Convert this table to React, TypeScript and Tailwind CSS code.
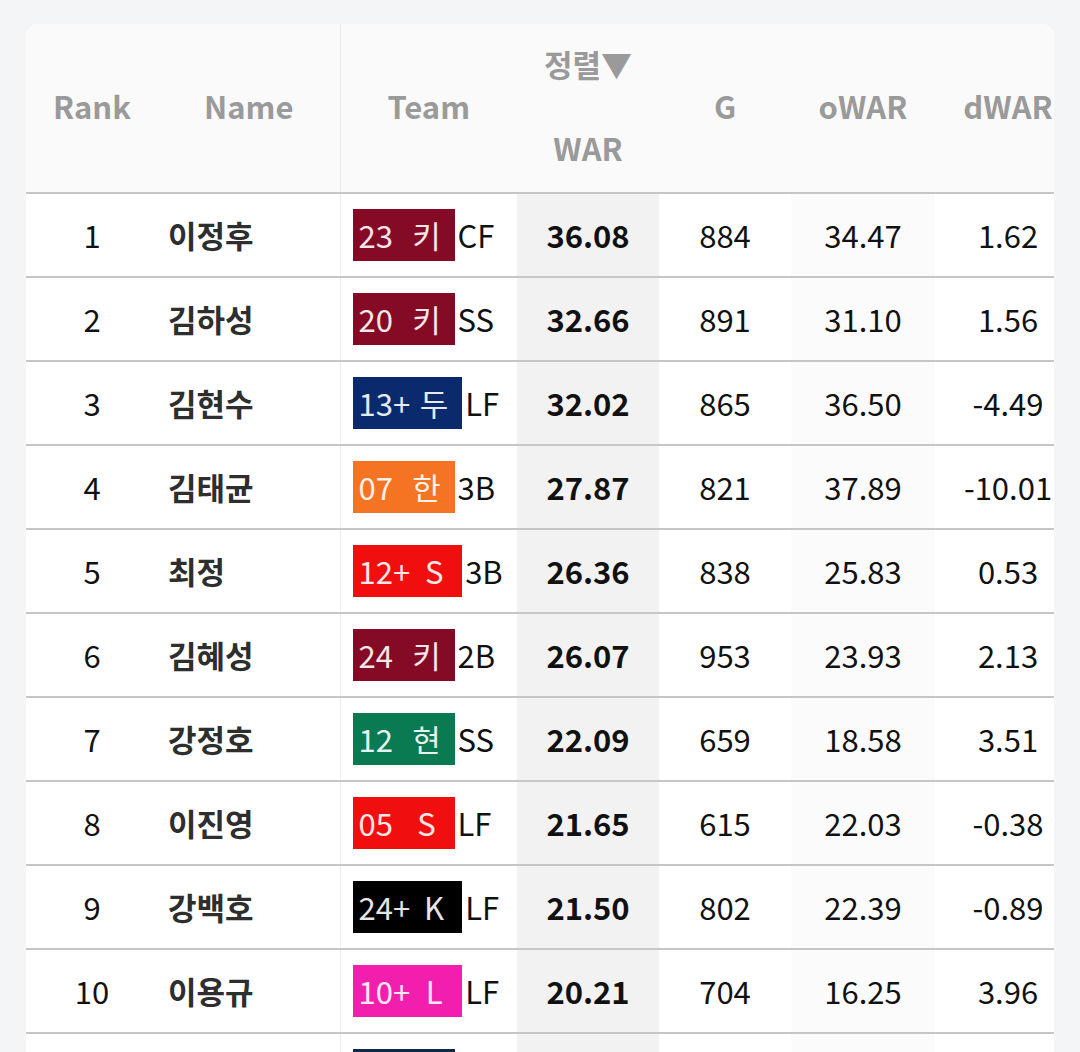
import React from "react";

type Row = {
  rank: number;
  name: string;
  num: string;
  team: string;
  color: string;
  pos: string;
  war: string;
  g: string;
  owar: string;
  dwar: string;
};

const rows: Row[] = [
  { rank: 1, name: "이정후", num: "23", team: "키", color: "bg-[#840a25]", pos: "CF", war: "36.08", g: "884", owar: "34.47", dwar: "1.62" },
  { rank: 2, name: "김하성", num: "20", team: "키", color: "bg-[#840a25]", pos: "SS", war: "32.66", g: "891", owar: "31.10", dwar: "1.56" },
  { rank: 3, name: "김현수", num: "13+", team: "두", color: "bg-[#0b2a6e]", pos: "LF", war: "32.02", g: "865", owar: "36.50", dwar: "-4.49" },
  { rank: 4, name: "김태균", num: "07", team: "한", color: "bg-[#f47424]", pos: "3B", war: "27.87", g: "821", owar: "37.89", dwar: "-10.01" },
  { rank: 5, name: "최정", num: "12+", team: "S", color: "bg-[#f00e0e]", pos: "3B", war: "26.36", g: "838", owar: "25.83", dwar: "0.53" },
  { rank: 6, name: "김혜성", num: "24", team: "키", color: "bg-[#840a25]", pos: "2B", war: "26.07", g: "953", owar: "23.93", dwar: "2.13" },
  { rank: 7, name: "강정호", num: "12", team: "현", color: "bg-[#0a7a52]", pos: "SS", war: "22.09", g: "659", owar: "18.58", dwar: "3.51" },
  { rank: 8, name: "이진영", num: "05", team: "S", color: "bg-[#f00e0e]", pos: "LF", war: "21.65", g: "615", owar: "22.03", dwar: "-0.38" },
  { rank: 9, name: "강백호", num: "24+", team: "K", color: "bg-[#000000]", pos: "LF", war: "21.50", g: "802", owar: "22.39", dwar: "-0.89" },
  { rank: 10, name: "이용규", num: "10+", team: "L", color: "bg-[#f21fae]", pos: "LF", war: "20.21", g: "704", owar: "16.25", dwar: "3.96" },
  { rank: 11, name: "양의지", num: "15", team: "N", color: "bg-[#0f2847]", pos: "C", war: "19.87", g: "702", owar: "17.40", dwar: "2.47" },
];

export default function App() {
  return (
    <div
      className="h-[1052px] w-[1080px] overflow-hidden bg-[#f4f5f7] pt-[24px] pl-[26px]"
      style={{ fontFamily: '"Noto Sans CJK KR", "Noto Sans", sans-serif' }}
    >
      <div className="w-[1028px] overflow-hidden rounded-t-[12px] bg-white">
        <table className="w-[1055px] table-fixed border-collapse">
          <colgroup>
            <col className="w-[132px]" />
            <col className="w-[182px]" />
            <col className="w-[177px]" />
            <col className="w-[142px]" />
            <col className="w-[132px]" />
            <col className="w-[144px]" />
            <col className="w-[146px]" />
          </colgroup>
          <thead>
            <tr className="h-[168px] bg-[#fafafa] text-[31px] font-bold text-[#9a9a9a] border-b-2 border-[#c6c6c6]">
              <th className="pb-[4px] text-center font-bold">Rank</th>
              <th className="pb-[4px] text-center font-bold border-r border-[#ececec]">Name</th>
              <th className="pb-[4px] text-center font-bold">Team</th>
              <th className="p-0 text-center font-bold leading-[84px]">
                <div className="relative -top-[2px]">
                  <div>정렬▼</div>
                  <div>WAR</div>
                </div>
              </th>
              <th className="pb-[4px] text-center font-bold">G</th>
              <th className="pb-[4px] text-center font-bold">oWAR</th>
              <th className="pb-[4px] text-center font-bold">dWAR</th>
            </tr>
          </thead>
          <tbody>
            {rows.map((r) => (
              <tr key={r.rank} className="h-[84px] border-b-2 border-[#c6c6c6] text-[31px] text-[#111]">
                <td className="text-center">{r.rank}</td>
                <td className="pl-[10px] font-bold text-[#2e2e2e] border-r border-[#ececec]">{r.name}</td>
                <td className="pl-[12px]">
                  <div className="flex items-center">
                    <span className={`flex h-[52px] items-center gap-[8px] pl-[6px] pr-[12px] whitespace-nowrap text-white/90 ${r.color}`}>
                      <span className="min-w-[44px]">{r.num}</span>
                      <span className="w-[32px] text-center">{r.team}</span>
                    </span>
                    <span className="ml-[3px]">{r.pos}</span>
                  </div>
                </td>
                <td className="bg-[#f2f2f2] text-center font-bold">{r.war}</td>
                <td className="text-center">{r.g}</td>
                <td className="bg-[#fbfbfb] text-center">{r.owar}</td>
                <td className="text-center">{r.dwar}</td>
              </tr>
            ))}
          </tbody>
        </table>
      </div>
    </div>
  );
}
